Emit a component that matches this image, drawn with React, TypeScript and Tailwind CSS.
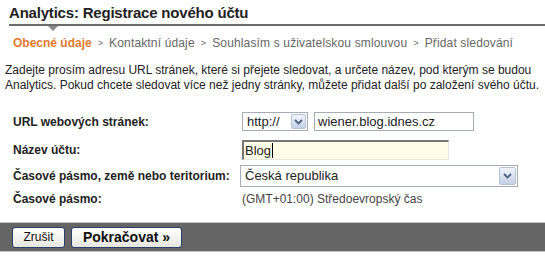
import React from "react";

const Chevron = () => (
  <svg width="9" height="6" viewBox="0 0 9 6">
    <path d="M1 1 L4.5 4.5 L8 1" stroke="#4d6185" strokeWidth="1.8" fill="none" />
  </svg>
);

const DropBtn = ({ className }: { className: string }) => (
  <div
    className={`flex items-center justify-center border border-[#b7c3d9] bg-gradient-to-b from-[#f2f4fb] to-[#c4cfe6] rounded-[2px] ${className}`}
  >
    <Chevron />
  </div>
);

export default function App() {
  return (
    <div
      className="w-[545px] h-[257px] bg-white overflow-hidden text-[#222]"
      style={{ fontFamily: '"Liberation Sans", Arial, sans-serif' }}
    >
      {/* Title */}
      <div className="pl-[9px] pt-[3px]">
        <div className="text-[15px] font-bold leading-[19px] text-[#222] tracking-[-0.2px]">
          Analytics: Registrace nového účtu
        </div>
        <div className="relative mt-[2px] h-[2px] bg-[#6b6b6b]">
          <div className="absolute left-[39px] top-[2px] w-0 h-0 border-l-[5px] border-r-[5px] border-t-[5px] border-l-transparent border-r-transparent border-t-[#8a8a8a]" />
        </div>
      </div>

      {/* Breadcrumb */}
      <div className="pl-[13px] mt-[10px] text-[12px] leading-[14px] text-[#666] flex items-center whitespace-nowrap tracking-[0.15px]">
        <span className="font-bold text-[#e07a2e] tracking-normal">Obecné údaje</span>
        <span className="mx-[6px] text-[9px]">&gt;</span>
        <span>Kontaktní údaje</span>
        <span className="mx-[6px] text-[9px]">&gt;</span>
        <span>Souhlasím s uživatelskou smlouvou</span>
        <span className="mx-[6px] text-[9px]">&gt;</span>
        <span>Přidat sledování</span>
      </div>

      {/* Paragraph */}
      <div className="pl-[5px] mt-[13px] text-[12px] leading-[15px] text-[#222] whitespace-nowrap">
        <div>Zadejte prosím adresu URL stránek, které si přejete sledovat, a určete název, pod kterým se budou</div>
        <div>Analytics. Pokud chcete sledovat více než jedny stránky, můžete přidat další po založení svého účtu.</div>
      </div>

      {/* Form */}
      <div className="pl-[13px] mt-[19px] text-[12px]">
        <div className="flex items-center h-[19px]">
          <div className="w-[229px] font-bold">URL webových stránek:</div>
          <div className="flex items-center h-[19px] w-[66px] border border-[#a5acb5] bg-white pl-[4px] pr-[1px] justify-between">
            <span className="text-[13px]">http://</span>
            <DropBtn className="w-[15px] h-[15px]" />
          </div>
          <div className="ml-[6px] h-[19px] w-[160px] border border-[#a5acb5] bg-white pl-[3px] flex items-center text-[13px]">
            wiener.blog.idnes.cz
          </div>
        </div>

        <div className="flex items-center h-[20px] mt-[9px]">
          <div className="w-[229px] font-bold">Název účtu:</div>
          <div className="h-[20px] w-[207px] bg-[#fffde8] border-t-2 border-l-2 border-b border-r border-t-[#777] border-l-[#777] border-b-[#e8e8e0] border-r-[#e8e8e0] pl-[1px] flex items-center text-[13px]">
            Blog<span className="inline-block w-[1px] h-[15px] bg-black ml-[1px]" />
          </div>
        </div>

        <div className="flex items-center h-[22px] mt-[5px]">
          <div className="w-[227px] font-bold">Časové pásmo, země nebo teritorium:</div>
          <div className="h-[22px] w-[278px] border border-[#a5acb5] bg-white pl-[4px] pr-[1px] flex items-center justify-between text-[13px]">
            <span>Česká republika</span>
            <DropBtn className="w-[17px] h-[18px]" />
          </div>
        </div>

        <div className="flex items-center h-[14px] mt-[5px]">
          <div className="w-[229px] font-bold">Časové pásmo:</div>
          <div className="text-[12px] text-[#444]">(GMT+01:00) Středoevropský čas</div>
        </div>
      </div>

      {/* Button bar */}
      <div className="mt-[16px] border-t border-b border-t-[#c4c4c4] border-b-[#c4c4c4] bg-[#656565] h-[30px] flex items-center pl-[12px] gap-[6px]">
        <button className="h-[21px] w-[53px] rounded-[3px] border border-[#2b3f6b] bg-gradient-to-b from-white to-[#e6e6e0] text-[12px] text-[#111] leading-none">
          Zrušit
        </button>
        <button className="h-[21px] w-[111px] rounded-[3px] border border-[#2b3f6b] bg-gradient-to-b from-white to-[#e6e6e0] text-[14px] font-bold text-[#111] leading-none">
          Pokračovat »
        </button>
      </div>
    </div>
  );
}
